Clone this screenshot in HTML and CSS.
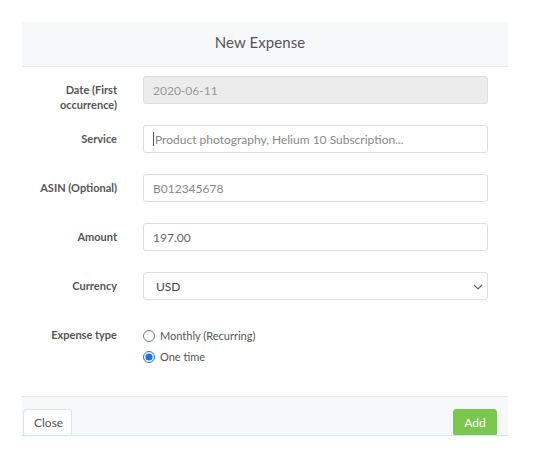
FILE: index.html
```html
<!DOCTYPE html>
<html lang="en">
<head>
<meta charset="utf-8">
<title>New Expense</title>
<link rel="stylesheet" href="styles.css">
</head>
<body>
<div class="modal">
  <div class="modal-header">
    <h4 class="modal-title">New Expense</h4>
  </div>
  <div class="modal-body">
    <form class="form">
      <label class="label">Date (First occurrence)</label>
      <input class="control control-disabled" type="text" value="2020-06-11" disabled>

      <label class="label">Service</label>
      <div class="control control-text"><span class="caret"></span><span class="placeholder">Product photography, Helium 10 Subscription...</span></div>

      <label class="label">ASIN (Optional)</label>
      <input class="control" type="text" placeholder="B012345678">

      <label class="label">Amount</label>
      <input class="control" type="text" value="197.00">

      <label class="label">Currency</label>
      <div class="select-wrap">
        <select class="control control-select">
          <option>USD</option>
        </select>
        <svg class="chevron" width="10" height="6" viewBox="0 0 10 6"><path d="M1 1 L5 5 L9 1" fill="none" stroke="#666" stroke-width="1.2"/></svg>
      </div>

      <label class="label">Expense type</label>
      <div class="radios">
        <label class="radio"><input type="radio" name="type"> <span>Monthly (Recurring)</span></label>
        <label class="radio"><input type="radio" name="type" checked> <span>One time</span></label>
      </div>
    </form>
  </div>
  <div class="modal-footer">
    <button class="btn btn-close" type="button">Close</button>
    <button class="btn btn-add" type="button">Add</button>
  </div>
</div>
</body>
</html>
```

FILE: styles.css
```css
* { box-sizing: border-box; }
html, body { margin: 0; padding: 0; background: #fff; }
body {
  font-family: "Lato", "Open Sans", "DejaVu Sans", sans-serif;
  color: #555;
  padding: 22px 50px 0 22px;
}
.modal {
  width: 486px;
  background: #fff;
}
.modal-header {
  height: 45px;
  background: #f7f8f9;
  border-bottom: 1px solid #e6e8ea;
  display: flex;
  align-items: center;
  justify-content: center;
  padding: 0 10px 4px 0;
}
.modal-title {
  margin: 0;
  font-weight: 400;
  font-size: 15px;
  color: #555;
  letter-spacing: 0.1px;
}
.modal-body {
  padding: 9px 20px 32px 0;
}
.form {
  display: grid;
  grid-template-columns: 95px 345px;
  grid-template-rows: 28px 28px 28px 28px 28px 43px;
  column-gap: 26px;
  row-gap: 21px;
}
.label {
  text-align: right;
  font-size: 11px;
  font-weight: 700;
  line-height: 15px;
  color: #555;
  padding-top: 6px;
}
.control {
  height: 28px;
  width: 100%;
  border: 1px solid #dcdfe2;
  border-radius: 3px;
  background: #fff;
  font-family: inherit;
  font-size: 12px;
  color: #666;
  padding: 0 9px;
  outline: none;
  margin: 0;
}
.control::placeholder { color: #888; }
.control-disabled {
  background: #ececec;
  color: #999;
}
.control-text {
  display: flex;
  align-items: center;
}
.caret {
  width: 1px;
  height: 14px;
  background: #555;
  margin-right: 1px;
}
.placeholder { color: #888; }
.select-wrap { position: relative; }
.control-select {
  -webkit-appearance: none;
  appearance: none;
  padding-left: 12px;
  color: #444;
  font-size: 12px;
}
.chevron {
  position: absolute;
  right: 5px;
  top: 12px;
  pointer-events: none;
}
.radios {
  display: flex;
  flex-direction: column;
  gap: 8px;
  padding-top: 8px;
}
.radio {
  display: flex;
  align-items: center;
  font-size: 11px;
  line-height: 13px;
  color: #555;
}
.radio input {
  margin: 0 5px 0 0;
  width: 12px;
  height: 12px;
  accent-color: #1a73e8;
}
.modal-footer {
  height: 40px;
  background: #f7f8f9;
  border-top: 1px solid #e6e8ea;
  border-bottom: 1px solid #cfe3f3;
  display: flex;
  justify-content: space-between;
  align-items: flex-start;
  padding: 12px 11px 0 1px;
  overflow: hidden;
}
.btn {
  height: 27px;
  font-family: inherit;
  font-size: 12px;
  border-radius: 3px;
  padding: 0 10px;
  flex: none;
}
.btn-close {
  width: 49px;
  background: #fff;
  border: 1px solid #e1e3e5;
  color: #555;
}
.btn-add {
  width: 44px;
  background: #7ac64e;
  border: 1px solid #7ac64e;
  color: #fff;
}
```
